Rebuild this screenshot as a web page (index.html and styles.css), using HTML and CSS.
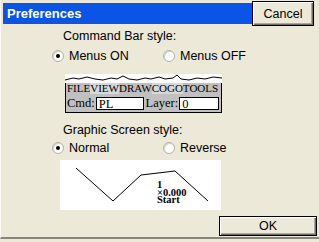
FILE: index.html
```html
<!DOCTYPE html>
<html lang="en">
<head>
<meta charset="UTF-8" />
<title>Preferences</title>
<link rel="stylesheet" href="styles.css">
</head>
<body>

<!-- Dialog -->
<div class="dialog">
  <div class="titlebar">
    <div class="title">Preferences</div>
    <button class="btn btn-cancel">Cancel</button>
  </div>

  <div class="label first">Command Bar style:</div>
  <div class="radios">
    <label class="radio"><span class="dot checked"></span>Menus ON</label>
    <label class="radio"><span class="dot"></span>Menus OFF</label>
  </div>

  <!-- preview of command bar -->
  <div class="cmdbar">
    <svg class="wave" width="157" height="9" viewBox="0 0 157 9">
      <polyline fill="none" stroke="#000" stroke-width="1"
        points="0,6 8,4 14,5 22,3 30,5 38,6 46,4 52,5 58,2 64,5 72,6 80,4 86,5 94,3 100,5 108,4 112,1 116,5 124,6 132,4 140,5 148,3 157,4" />
    </svg>
    <div class="cmdbody">
      <div class="menu">
        <span>FILE</span><span class="lite">VIEW</span><span>DRAW</span><span class="lite">COGO</span><span>TOOLS</span>
      </div>
      <div class="cmdrow">
        <span>Cmd:</span><span class="field f-cmd">PL</span>
        <span>Layer:</span><span class="field f-layer">0</span>
      </div>
    </div>
  </div>

  <div class="label">Graphic Screen style:</div>
  <div class="radios second">
    <label class="radio"><span class="dot checked"></span>Normal</label>
    <label class="radio"><span class="dot"></span>Reverse</label>
  </div>

  <!-- preview of graphic screen -->
  <div class="screen">
    <svg width="161" height="50" viewBox="0 0 161 50">
      <polyline fill="none" stroke="#000" stroke-width="1"
        points="16,8 53,41 81,15 115,11 148,41" />
    </svg>
    <div class="marker">
      <div>1</div>
      <div>×0.000</div>
      <div>Start</div>
    </div>
  </div>

  <div class="footer">
    <button class="btn btn-ok">OK</button>
  </div>
</div>

</body>
</html>
```

FILE: styles.css
```css
body {
  margin: 0;
  padding: 0;
  background: #ece9d8;
  font-family: "Liberation Sans", Arial, sans-serif;
  font-size: 12.5px;
  color: #000;
}
/* Dialog frame */
.dialog {
  width: 319px;
  height: 239px;
  box-sizing: border-box;
  border-left: 1px solid #fbfaf6;
  border-bottom: 2px solid #87857a;
  display: flex;
  flex-direction: column;
}
/* Title */
.titlebar {
  display: flex;
  align-items: flex-start;
  padding: 1px 0 0 2px;
  height: 25px;
}
.title {
  flex: 1;
  margin-top: 2px;
  height: 21px;
  line-height: 21px;
  background: #0a55e6;
  color: #fff;
  font-weight: bold;
  font-size: 13px;
  padding-left: 4px;
}
.btn {
  font-family: "Liberation Sans", Arial, sans-serif;
  font-size: 12.5px;
  background: #ece9d8;
  color: #000;
  border: 1px solid #000;
  box-shadow: inset 1px 1px 0 #fff, inset -1px -1px 0 #716f64, inset -2px -2px 0 #aca899;
  padding: 0;
}
.btn-cancel {
  width: 62px;
  height: 25px;
  margin-right: 5px;
}
/* Labels and radios */
.label {
  padding-left: 62px;
  line-height: 14px;
  margin-top: 10px;
}
.label.first {
  margin-top: 3px;
}
.radios {
  display: flex;
  padding-left: 51px;
  margin-top: 6px;
  line-height: 14px;
}
.radios.second {
  margin-top: 4px;
}
.radio {
  display: flex;
  align-items: center;
  width: 111px;
}
.dot {
  width: 12px;
  height: 12px;
  box-sizing: border-box;
  border-radius: 50%;
  border: 1px solid #b4b1a4;
  background: #fff;
  box-shadow: inset 1px 1px 1px #d4d0c4;
  margin-right: 5px;
  position: relative;
}
.dot.checked::after {
  content: "";
  position: absolute;
  left: 3px;
  top: 3px;
  width: 4px;
  height: 4px;
  border-radius: 50%;
  background: #000;
}
/* Command bar preview */
.cmdbar {
  margin: 11px 0 0 64px;
  width: 157px;
  background: #fff;
}
.wave {
  display: block;
}
.cmdbody {
  background: #c0c0c0;
  border: 1px solid #000;
  border-top: none;
  font-family: "Liberation Serif", "Times New Roman", serif;
  font-size: 11px;
}
.menu {
  display: flex;
  padding-left: 1px;
  line-height: 11px;
  height: 11px;
}
.menu .lite {
  background: #d8d8d8;
}
.cmdrow {
  display: flex;
  align-items: center;
  height: 18px;
  padding-left: 1px;
  font-size: 12.5px;
}
.field {
  background: #fff;
  border: 1px solid #000;
  height: 13px;
  line-height: 12px;
  box-sizing: border-box;
  padding-left: 2px;
  margin-left: 1px;
  margin-right: 2px;
}
.f-cmd {
  width: 53px;
}
.f-layer {
  width: 44px;
}
/* Graphic screen preview */
.screen {
  margin: 5px 0 0 59px;
  width: 161px;
  height: 50px;
  background: #fff;
  position: relative;
}
.screen svg {
  display: block;
}
.marker {
  position: absolute;
  left: 97px;
  top: 21px;
  font-family: "Liberation Serif", "Times New Roman", serif;
  font-weight: bold;
  font-size: 10.5px;
  line-height: 7.5px;
}
/* Buttons row */
.footer {
  display: flex;
  justify-content: flex-end;
  margin-top: 6px;
}
.btn-ok {
  width: 98px;
  height: 20px;
  margin-right: 2px;
}
```
